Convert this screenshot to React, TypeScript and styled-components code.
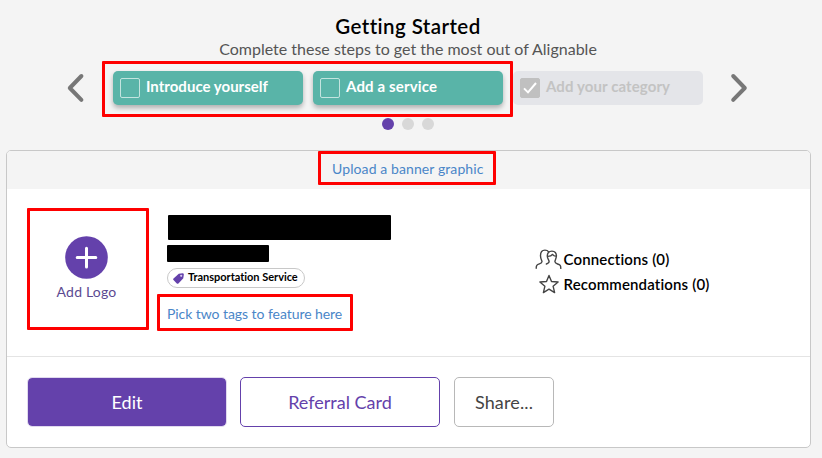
import React from "react";
import styled, { createGlobalStyle, css } from "styled-components";

const purple = "#6441ab";
const green = "#59b4a8";

const GlobalStyle = createGlobalStyle`
  *, *::before, *::after { box-sizing: border-box; }
  body {
    margin: 0;
    background: #f4f4f4;
    color: #000;
    font-family: "Lato", "Liberation Sans", sans-serif;
    font-variant-ligatures: none;
  }
  button { font-family: inherit; font-variant-ligatures: none; }
`;

const Page = styled.main`
  width: 822px;
  height: 458px;
  overflow: hidden;
  padding: 14px 11px 0 6px;
`;

const Intro = styled.header`
  display: flex;
  flex-direction: column;
  align-items: center;
  padding-right: 1px;
`;

const Title = styled.h1`
  margin: 0;
  font-size: 20.5px;
  font-weight: 600;
  line-height: 24px;
  letter-spacing: 0.42px;
`;

const Subtitle = styled.p`
  margin: 1px 0 0;
  color: #555;
  font-size: 16px;
  line-height: 20px;
`;

const Carousel = styled.section`
  display: flex;
  align-items: flex-start;
  margin-top: 12px;
  padding-left: 60px;
`;

const Arrow = styled.button`
  display: block;
  width: 20px;
  height: 34px;
  padding: 0;
  border: 0;
  background: none;
  color: #777;
`;

const Steps = styled.div`
  position: relative;
  display: flex;
  gap: 10px;
  margin: 0 27px;
`;

const Step = styled.div<{ $done?: boolean }>`
  display: flex;
  width: 190px;
  height: 34px;
  padding: 7px;
  gap: 6px;
  border-radius: 5px;
  font-size: 15px;
  font-weight: 700;
  line-height: 17px;
  white-space: nowrap;
  ${(p) =>
    p.$done
      ? css`
          background: #e4e5e9;
          color: #c3c3c3;
        `
      : css`
          background: ${green};
          color: #fff;
          box-shadow: 0 3px 5px rgba(0, 0, 0, 0.28);
        `}
`;

const CheckBox = styled.span<{ $done?: boolean }>`
  display: block;
  flex: none;
  width: 20px;
  height: 20px;
  border: 1px solid ${(p) => (p.$done ? "#c0c0c0" : "#c3e4df")};
  border-radius: 2px;
  background: ${(p) => (p.$done ? "#c0c0c0" : "transparent")};
`;

const StepLabel = styled.span<{ $spacing: number }>`
  letter-spacing: ${(p) => p.$spacing}px;
`;

const Dots = styled.div`
  display: flex;
  justify-content: center;
  gap: 8px;
  margin: 13px 0 0;
  padding-right: 1px;
`;

const Dot = styled.span<{ $active?: boolean }>`
  width: 12px;
  height: 12px;
  border-radius: 50%;
  background: ${(p) => (p.$active ? purple : "#d8d8d8")};
`;

const Card = styled.section`
  width: 805px;
  height: 298px;
  margin-top: 20px;
  border: 1px solid #c8c8c8;
  border-radius: 5px;
  background: #fff;
  overflow: hidden;
`;

const Banner = styled.div`
  display: flex;
  justify-content: center;
  height: 38px;
  padding-right: 1px;
  background: #f4f4f4;
`;

const Link = styled.a<{ $spacing: number }>`
  position: relative;
  color: #4a86c8;
  font-size: 14px;
  line-height: 20px;
  letter-spacing: ${(p) => p.$spacing}px;
  white-space: nowrap;
`;

const BannerLink = styled(Link)`
  width: 152px;
  line-height: 36px;
`;

const Highlight = styled.span<{ $top: number; $left: number; $width: number; $height: number }>`
  position: absolute;
  top: ${(p) => p.$top}px;
  left: ${(p) => p.$left}px;
  width: ${(p) => p.$width}px;
  height: ${(p) => p.$height}px;
  border: 3px solid #fe0000;
  border-radius: 1px;
  pointer-events: none;
`;

const Profile = styled.div`
  display: flex;
  height: 168px;
  padding: 19px 0 0 20px;
  border-bottom: 1px solid #e4e4e4;
`;

const LogoSlot = styled.div`
  display: flex;
  flex: none;
  flex-direction: column;
  align-items: center;
  width: 122px;
  height: 122px;
  padding-top: 25px;
  padding-right: 3px;
  border: 3px solid #fe0000;
  border-radius: 1px;
  color: #5b4a91;
  font-size: 14px;
  line-height: 20px;
  letter-spacing: 0.2px;
`;

const Plus = styled.svg`
  display: block;
  width: 43px;
  height: 43px;
  margin-bottom: 3px;
`;

const Details = styled.div`
  display: flex;
  flex-direction: column;
  align-items: flex-start;
  width: 386px;
  padding: 7px 0 0 18px;
`;

const Redacted = styled.div<{ $width: number; $height: number }>`
  width: ${(p) => p.$width}px;
  height: ${(p) => p.$height}px;
  border-radius: 1px;
  background: #000;
`;

const NameBar = styled(Redacted)`
  margin: 0 0 5px 1px;
`;

const Tag = styled.div`
  display: flex;
  align-items: flex-start;
  width: 138px;
  height: 20px;
  margin: 6px 0 16px;
  padding: 1px 0 0 5px;
  gap: 4px;
  border: 1px solid #c8c8c8;
  border-radius: 10px;
  font-size: 11px;
  font-weight: 700;
  line-height: 14px;
  letter-spacing: -0.02px;
  white-space: nowrap;
`;

const TagSvg = styled.svg`
  flex: none;
  width: 11px;
  height: 11px;
  margin-top: 3px;
`;

const Stats = styled.div`
  padding-top: 39px;
`;

const Stat = styled.div`
  display: flex;
  align-items: center;
  height: 25px;
  font-size: 15px;
  font-weight: 600;
  line-height: 25px;
  letter-spacing: 0.15px;
  white-space: nowrap;
`;

const StatIcon = styled.svg`
  flex: none;
  width: 28px;
  height: 22px;
  margin: 0 0.5px 1px 0;
  fill: none;
  stroke: #444;
  stroke-width: 1.4;
  stroke-linejoin: round;
  stroke-linecap: round;
`;

const Actions = styled.div`
  display: flex;
  padding: 20px 0 0 20px;
  gap: 14px;
`;

const Action = styled.button<{ $kind: "primary" | "outline" | "neutral" }>`
  width: ${(p) => (p.$kind === "neutral" ? 100 : 200)}px;
  height: 50px;
  margin-right: ${(p) => (p.$kind === "primary" ? -1 : 0)}px;
  padding: 0;
  border: 1px solid
    ${(p) => (p.$kind === "primary" ? "#e0d9ee" : p.$kind === "outline" ? purple : "#b8b8b8")};
  border-radius: 5px;
  background: ${(p) => (p.$kind === "primary" ? purple : "#fff")};
  background-clip: padding-box;
  color: ${(p) => (p.$kind === "primary" ? "#fff" : p.$kind === "outline" ? purple : "#444")};
  font-size: 18px;
  line-height: 46px;
  letter-spacing: ${(p) => (p.$kind === "neutral" ? 0.15 : 0)}px;
`;

const LeftChevron = () => (
  <svg width="20" height="34" viewBox="0 0 20 34" fill="none">
    <path d="M15.4 5 3.8 17 15.4 28.8" stroke="currentColor" strokeWidth="4" strokeLinejoin="round" strokeLinecap="round" />
  </svg>
);

const RightChevron = () => (
  <svg width="20" height="34" viewBox="0 0 20 34" fill="none">
    <path d="M3.2 5 14.8 17 3.2 28.8" stroke="currentColor" strokeWidth="4" strokeLinejoin="round" strokeLinecap="round" />
  </svg>
);

const steps = [
  { label: "Introduce yourself", done: false, spacing: 0.02 },
  { label: "Add a service", done: false, spacing: 0.15 },
  { label: "Add your category", done: true, spacing: 0.1 },
];

export default function App() {
  return (
    <>
      <GlobalStyle />
      <Page>
        <Intro>
          <Title>Getting Started</Title>
          <Subtitle>Complete these steps to get the most out of Alignable</Subtitle>
        </Intro>

        <Carousel>
          <Arrow aria-label="Previous"><LeftChevron /></Arrow>
          <Steps>
            {steps.map((s) => (
              <Step key={s.label} $done={s.done}>
                <CheckBox $done={s.done}>
                  {s.done && (
                    <svg width="18" height="18" viewBox="0 0 18 18" fill="none">
                      <path d="M3 9.4 7 13.4 15 4" stroke="#fff" strokeWidth="2" />
                    </svg>
                  )}
                </CheckBox>
                <StepLabel $spacing={s.spacing}>{s.label}</StepLabel>
              </Step>
            ))}
            <Highlight $top={-10} $left={-11} $width={411} $height={56} />
          </Steps>
          <Arrow aria-label="Next"><RightChevron /></Arrow>
        </Carousel>
        <Dots>
          <Dot $active />
          <Dot />
          <Dot />
        </Dots>

        <Card>
          <Banner>
            <BannerLink $spacing={0.1}>
              Upload a banner graphic
              <Highlight $top={0} $left={-14} $width={178} $height={34} />
            </BannerLink>
          </Banner>

          <Profile>
            <LogoSlot>
              <Plus viewBox="0 0 43 43">
                <circle cx="21.5" cy="21.5" r="21.3" fill={purple} />
                <path d="M21.5 12.3v18.6M12.2 21.6h18.6" stroke="#fff" strokeWidth="3" strokeLinecap="round" />
              </Plus>
              Add Logo
            </LogoSlot>
            <Details>
              <NameBar $width={223} $height={25} />
              <Redacted $width={102} $height={17} />
              <Tag>
                <TagSvg viewBox="0 0 11 11">
                  <path d="M5.8.7 9.6.2q1.2 0 1.2 1.2l-.5 3.8-4.9 5.2q-.8.7-1.6 0L.5 7.1q-.7-.8 0-1.6Z" fill={purple} />
                  <circle cx="8.2" cy="2.8" r="1.1" fill="#d9cdee" />
                </TagSvg>
                Transportation Service
              </Tag>
              <Link $spacing={-0.06}>
                Pick two tags to feature here
                <Highlight $top={-10} $left={-10} $width={196} $height={37} />
              </Link>
            </Details>
            <Stats>
              <Stat>
                <StatIcon viewBox="0 0 28 22">
                  <path d="M1.2 20.3c0-3 .6-3.5 3.2-4.4 2-.7 2.6-1.1 2.6-2.5 0-1-1.5-2.2-1.5-5.7 0-3.5 1.3-5.6 4.4-5.6 1.8 0 3 .6 3.7 1.8" />
                  <path d="M12.3 8.3c-.1-3.2 1.5-5.2 4.6-5.2s4.6 2 4.5 5c-.1 2.8-1.5 4-1.5 5.4 0 1.4.7 1.8 2.7 2.5 2.6.9 3.2 1.5 3.2 4.4M12.3 8.3c.2 2.9 1.8 3.7 1.8 5.3 0 1.2-.7 1.8-2.7 2.4M12.4 8.4c2.9.1 4.3-.7 5.1-2 .8 1.2 1.9 1.8 3.8 2" />
                </StatIcon>
                Connections (0)
              </Stat>
              <Stat>
                <StatIcon viewBox="0 0 28 22">
                  <path d="m14 2.4 2.5 6.1 6.6.5-5 4.2 1.5 6.4-5.6-3.5-5.6 3.5 1.5-6.4-5-4.2 6.6-.5Z" />
                </StatIcon>
                Recommendations (0)
              </Stat>
            </Stats>
          </Profile>

          <Actions>
            <Action $kind="primary">Edit</Action>
            <Action $kind="outline">Referral Card</Action>
            <Action $kind="neutral">Share...</Action>
          </Actions>
        </Card>
      </Page>
    </>
  );
}
